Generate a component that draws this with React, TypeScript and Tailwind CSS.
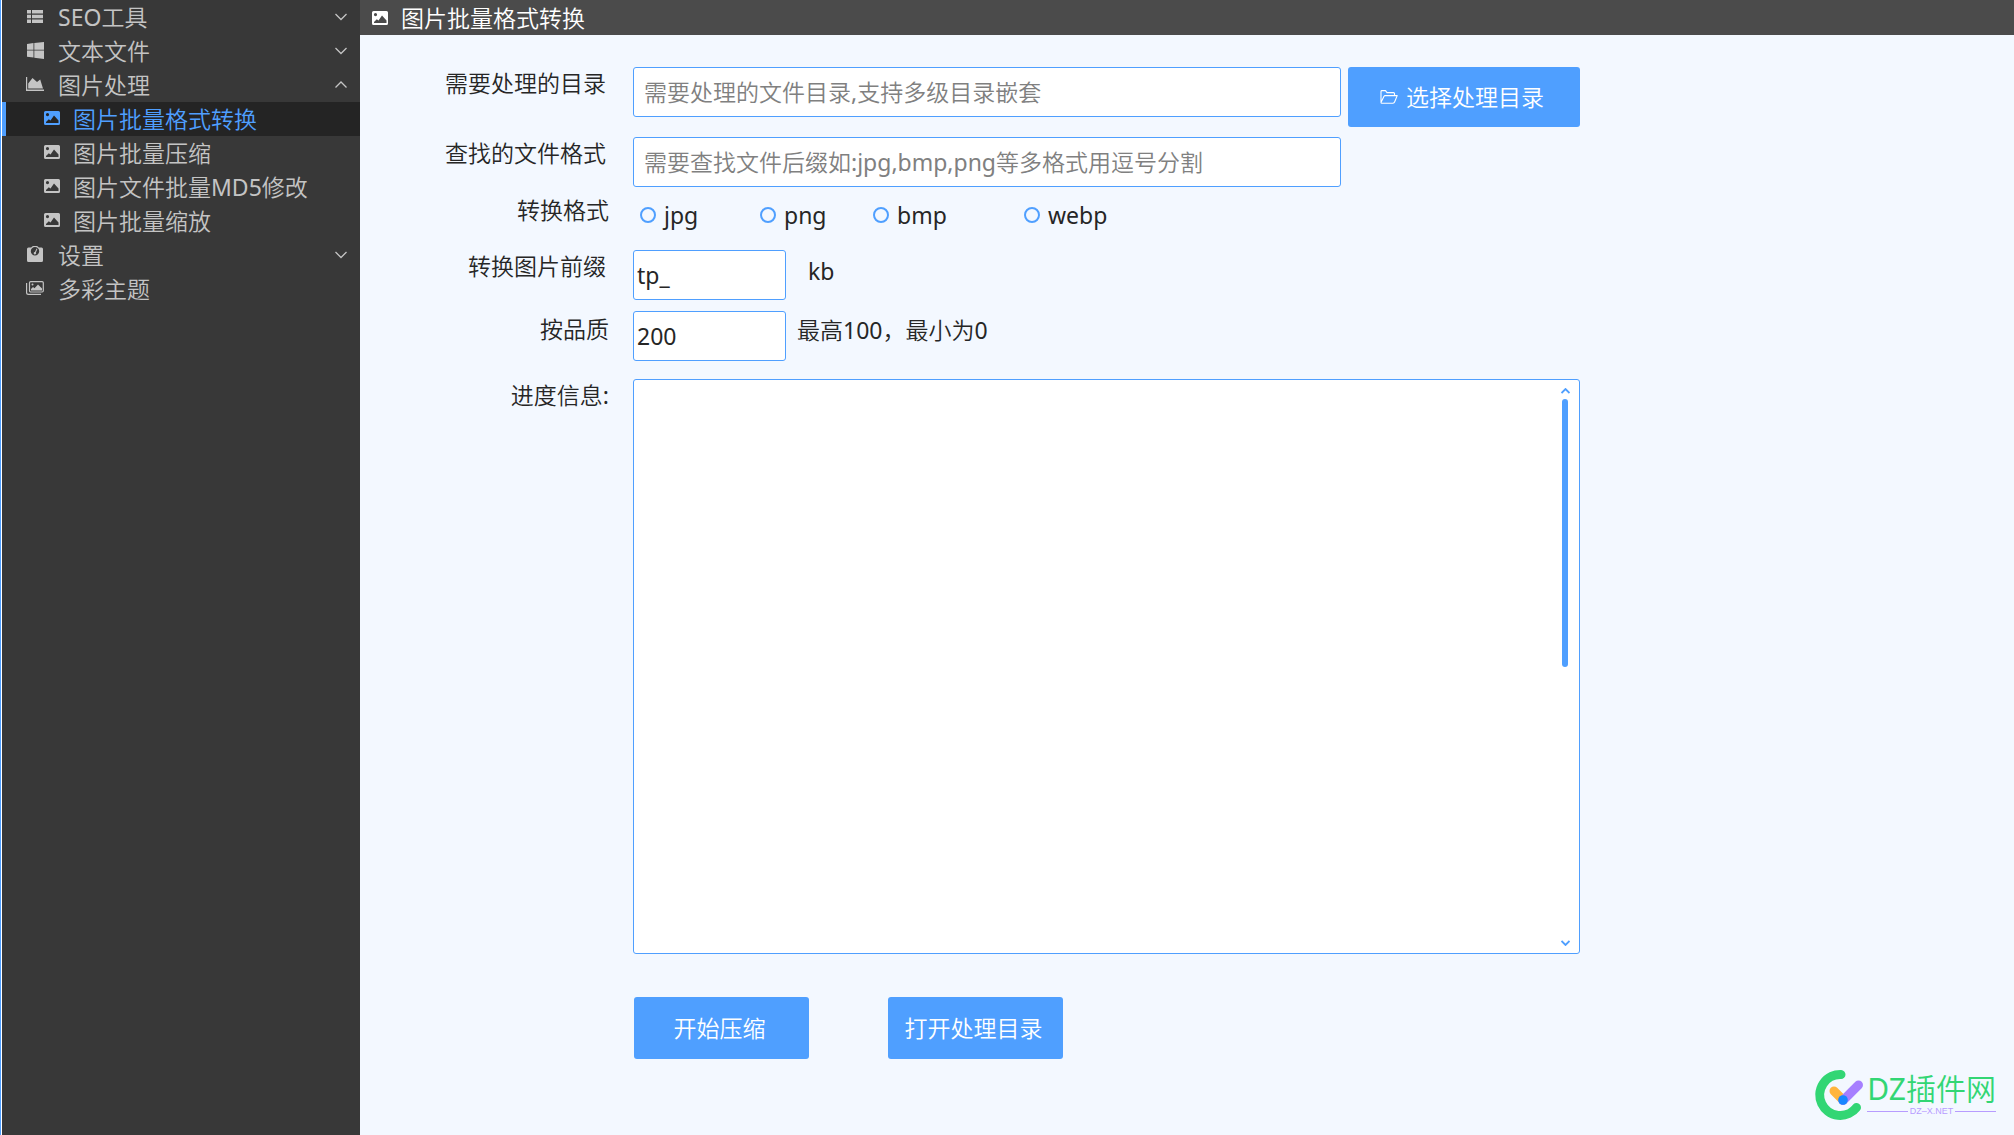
import type { ReactNode } from "react";

type IconProps = { className?: string };

const ListIcon = () => (
  <svg viewBox="0 0 16 13" width="16" height="13" fill="currentColor">
    <path d="M0 0h4v3.500H0zM5 0h11v3.500H5zM0 4.700h4v3.500H0zM5 4.700h11v3.500H5zM0 9.400h4v3.500H0zM5 9.400h11v3.500H5z" />
  </svg>
);
const WindowsIcon = () => (
  <svg viewBox="0 0 17 17" width="17" height="17" fill="currentColor">
    <path d="M0 2 6.500 1v6.800H0zM7.300.9 17 0v7.800H7.300zM0 8.600h6.500v7L0 14.800zM7.300 8.600H17V17l-9.700-1.300z" />
  </svg>
);
const ChartIcon = () => (
  <svg viewBox="0 0 18 14" width="18" height="14" fill="currentColor">
    <path d="M0 0h1.200v12.600H18V14H0zM2.200 11.500V6.500L6.500 1l4.500 4 3.200-2.500L17 11.500z" />
  </svg>
);
const PictureIcon = ({ className }: IconProps) => (
  <svg viewBox="0 0 16 14" width="16" height="14" fill="currentColor" fillRule="evenodd" className={className}>
    <path d="M1.500 0h13A1.500 1.500 0 0 1 16 1.500v11a1.500 1.500 0 0 1-1.500 1.500h-13A1.500 1.500 0 0 1 0 12.500v-11A1.500 1.500 0 0 1 1.500 0zM3.500 2a1.600 1.600 0 1 0 0 3.200 1.600 1.600 0 0 0 0-3.200zM2 12h12.500V9.500L10 4.500 6.500 9.500l-1.700-1.200L2 11z" />
  </svg>
);
const GaugeIcon = () => (
  <svg viewBox="0 0 16 16" width="16" height="16" fill="currentColor" fillRule="evenodd">
    <path d="M1.500 1.500h2.700a4.800 4.800 0 0 1 7.600 0h2.700A1.500 1.500 0 0 1 16 3v11.500a1.500 1.500 0 0 1-1.500 1.500h-13A1.500 1.500 0 0 1 0 14.500V3a1.500 1.500 0 0 1 1.500-1.500zM8 1a4.200 4.200 0 1 0 0 8.400A4.200 4.200 0 0 0 8 1zm1.600 1.500.8.500-1.500 3.500a1.200 1.200 0 1 1-1-.5z" />
  </svg>
);
const GalleryIcon = () => (
  <svg viewBox="0 0 18 14" width="18" height="14" fill="none" stroke="currentColor">
    <rect x="3.500" y=".6" width="13.800" height="10.400" rx="1.200" strokeWidth="1.200" />
    <path d="M.6 2v9.500q0 1.900 1.900 1.900H15" strokeWidth="1.200" />
    <path d="M5 9.500V8l2-2 1.500 1.200L12 3.500l4 4v2z" fill="currentColor" stroke="none" />
    <circle cx="6.500" cy="3.500" r="1" fill="currentColor" stroke="none" />
  </svg>
);
const FolderIcon = () => (
  <svg viewBox="0 0 18 14" width="18" height="14" fill="none" stroke="currentColor" strokeWidth="1.100" strokeLinejoin="round">
    <path d="M1 12.500V1.500Q1 .6 2 .6h3.500L7 2.600h6.500q1 0 1 1v2M1 12.500l3-6.200q.4-.7 1.200-.7h12l-2.500 6.200q-.5 1.400-1.700 1.400H1.800Q1 13.200 1 12.500z" />
  </svg>
);
const Chevron = ({ up }: { up?: boolean }) => (
  <svg viewBox="0 0 12 8" width="12" height="8" fill="none" stroke="currentColor" strokeWidth="1.300">
    <path d={up ? "M.5 6.500 6 1l5.500 5.500" : "M.5 1 6 6.500 11.500 1"} />
  </svg>
);

function Group({ icon, label, state }: { icon: ReactNode; label: string; state?: "open" | "closed" }) {
  return (
    <button type="button" aria-expanded={state ? state === "open" : undefined} className="flex h-[34px] w-full shrink-0 items-center pr-[13px] pl-[23px] text-left">
      <span className="flex w-5 shrink-0 justify-center pb-0.5">{icon}</span>
      <span className="ml-[13px] flex-1">{label}</span>
      {state && <Chevron up={state === "open"} />}
    </button>
  );
}

function Item({ label, active }: { label: string; active?: boolean }) {
  return (
    <a
      href="#"
      aria-current={active ? "page" : undefined}
      className={
        active
          ? "flex h-[34px] shrink-0 items-center border-l-4 border-[#4f9fff] bg-[#242424] pl-[38px] text-[#4f9fff]"
          : "flex h-[34px] shrink-0 items-center border-l-4 border-transparent pl-[38px]"
      }
    >
      <PictureIcon className="mr-[13px] mb-0.5 shrink-0" />
      {label}
    </a>
  );
}

function Radio({ label, className }: { label: string; className: string }) {
  return (
    <label className={"flex items-center gap-2 " + className}>
      <input type="radio" name="format" className="size-4 appearance-none rounded-full border-2 border-[#4f9fff] checked:bg-[#4f9fff]" />
      {label}
    </label>
  );
}

const labelClass = "w-[249px] shrink-0 text-right leading-8";
const fieldClass = "h-[50px] rounded-[3px] border border-[#4f9fff] bg-white outline-none placeholder:text-[#808080]";
const buttonClass = "flex items-center justify-center rounded-[3px] bg-[#4f9fff] pr-1 text-white";

function Logo() {
  return (
    <div className="absolute right-[18px] bottom-[14px] flex items-center gap-1">
      <svg viewBox="0 0 48 52" width="48" height="52" fill="none" strokeLinecap="round">
        <path d="M26 5.500A20.500 20.500 0 1 0 41.500 38.500" stroke="#32d674" strokeWidth="9" />
        <path d="m19 22 9 9" stroke="#ffb53e" strokeWidth="9" />
        <path d="M43.500 16 28 31.500" stroke="#a67fff" strokeWidth="9" />
        <circle cx="28" cy="31" r="4.800" fill="#1787ff" />
      </svg>
      <div>
        <div className="text-[30px] leading-8 whitespace-nowrap text-[#32d674]">DZ插件网</div>
        <div className="flex items-center gap-0.5 font-['Liberation_Sans',sans-serif] text-[9px] leading-3 text-[#b79cff]">
          <span className="h-px flex-1 bg-[#b79cff]" />
          DZ–X.NET
          <span className="h-px flex-1 bg-[#b79cff]" />
        </div>
      </div>
    </div>
  );
}

export default function App() {
  return (
    <div className="relative flex min-h-screen border-l border-[#4f9fff] bg-[#f3f8ff] font-['Noto_Sans','Noto_Sans_CJK_SC_DemiLight','Noto_Sans_CJK_SC',sans-serif] text-[23px] leading-[34px] text-[#262626]">
      <nav className="flex w-[359px] shrink-0 flex-col border-l border-white bg-[#383838] text-[#c4c4c4]">
        <Group icon={<ListIcon />} label="SEO工具" state="closed" />
        <Group icon={<WindowsIcon />} label="文本文件" state="closed" />
        <Group icon={<ChartIcon />} label="图片处理" state="open" />
        <Item label="图片批量格式转换" active />
        <Item label="图片批量压缩" />
        <Item label="图片文件批量MD5修改" />
        <Item label="图片批量缩放" />
        <Group icon={<GaugeIcon />} label="设置" state="closed" />
        <Group icon={<GalleryIcon />} label="多彩主题" />
      </nav>

      <main className="min-w-0 flex-1">
        <header className="flex h-[35px] items-center bg-[#4b4b4b] pl-3 text-white">
          <PictureIcon className="mr-[13px]" />
          <h1>图片批量格式转换</h1>
        </header>

        <form className="pt-8" onSubmit={(e) => e.preventDefault()}>
          <div className="flex items-start">
            <label htmlFor="dir" className={labelClass + " pr-[3px]"}>需要处理的目录</label>
            <input id="dir" placeholder="需要处理的文件目录,支持多级目录嵌套" className={fieldClass + " ml-6 w-[708px] px-[10px]"} />
            <button type="button" className={buttonClass + " ml-[7px] h-[60px] w-[232px] gap-2"}>
              <FolderIcon />
              选择处理目录
            </button>
          </div>

          <div className="mt-[10px] flex items-start">
            <label htmlFor="ext" className={labelClass + " pr-[3px]"}>查找的文件格式</label>
            <input id="ext" placeholder="需要查找文件后缀如:jpg,bmp,png等多格式用逗号分割" className={fieldClass + " ml-6 w-[708px] px-[10px]"} />
          </div>

          <div role="radiogroup" aria-labelledby="format-label" className="mt-[7px] flex items-start">
            <span id="format-label" className={labelClass}>转换格式</span>
            <div className="ml-[31px] flex pt-1">
              <Radio label="jpg" className="w-[120px]" />
              <Radio label="png" className="w-[113px]" />
              <Radio label="bmp" className="w-[151px]" />
              <Radio label="webp" className="" />
            </div>
          </div>

          <div className="mt-[18px] flex items-start">
            <label htmlFor="prefix" className={labelClass + " pr-[3px]"}>转换图片前缀</label>
            <input id="prefix" defaultValue="tp_" className={fieldClass + " ml-6 w-[153px] px-[3px]"} />
            <span className="pt-1 pl-[22px]">kb</span>
          </div>

          <div className="mt-[11px] flex items-start">
            <label htmlFor="quality" className={labelClass + " pt-0.5"}>按品质</label>
            <input id="quality" defaultValue="200" className={fieldClass + " ml-6 w-[153px] px-[3px]"} />
            <span className="pt-0.5 pl-[11px]">最高100，最小为0</span>
          </div>

          <div className="mt-[18px] flex items-start">
            <label htmlFor="log" className={labelClass}>进度信息:</label>
            <div className="ml-6 flex h-[575px] w-[947px] rounded-[3px] border border-[#4f9fff] bg-white">
              <textarea id="log" className="flex-1 resize-none p-2 outline-none" />
              <div className="flex w-7 flex-col items-center pt-2 pb-[7px] text-[#4f9fff]">
                <svg viewBox="0 0 9 6" width="9" height="6" fill="none" stroke="currentColor" strokeWidth="1.800">
                  <path d="m.5 5 4-4 4 4" />
                </svg>
                <span className="mt-[5px] h-[268px] w-1.5 rounded-full bg-[#4f9fff]" />
                <svg viewBox="0 0 9 6" width="9" height="6" fill="none" stroke="currentColor" strokeWidth="1.800" className="mt-auto">
                  <path d="m.5 1 4 4 4-4" />
                </svg>
              </div>
            </div>
          </div>

          <div className="mt-[43px] ml-[274px] flex gap-[79px]">
            <button type="submit" className={buttonClass + " h-[62px] w-[175px]"}>开始压缩</button>
            <button type="button" className={buttonClass + " h-[62px] w-[175px]"}>打开处理目录</button>
          </div>
        </form>
      </main>
      <Logo />
    </div>
  );
}
